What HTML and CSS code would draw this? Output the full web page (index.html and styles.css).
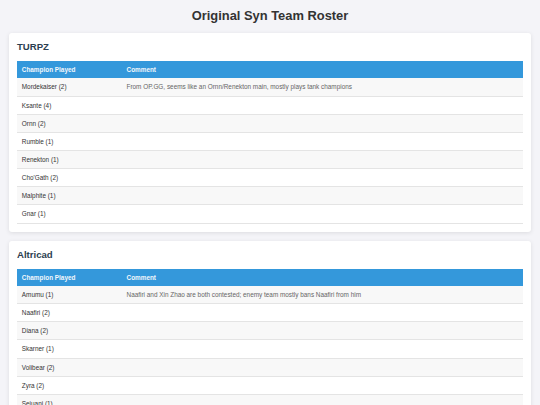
FILE: index.html
```html
<!DOCTYPE html>
<html>
<head>
<meta charset="utf-8">
<link rel="stylesheet" href="styles.css">
</head>
<body>
<h1 class="title">Original Syn Team Roster</h1>
<section class="card">
  <h2 class="player">TURPZ</h2>
  <table class="roster">
    <thead>
      <tr><th class="col-champ">Champion Played</th><th>Comment</th></tr>
    </thead>
    <tbody>
      <tr><td>Mordekaiser (2)</td><td class="comment">From OP.GG, seems like an Ornn/Renekton main, mostly plays tank champions</td></tr>
      <tr><td>Ksante (4)</td><td class="comment"></td></tr>
      <tr><td>Ornn (2)</td><td class="comment"></td></tr>
      <tr><td>Rumble (1)</td><td class="comment"></td></tr>
      <tr><td>Renekton (1)</td><td class="comment"></td></tr>
      <tr><td>Cho'Gath (2)</td><td class="comment"></td></tr>
      <tr><td>Malphite (1)</td><td class="comment"></td></tr>
      <tr><td>Gnar (1)</td><td class="comment"></td></tr>
    </tbody>
  </table>
</section>
<section class="card">
  <h2 class="player">Altricad</h2>
  <table class="roster">
    <thead>
      <tr><th class="col-champ">Champion Played</th><th>Comment</th></tr>
    </thead>
    <tbody>
      <tr><td>Amumu (1)</td><td class="comment">Naafiri and Xin Zhao are both contested; enemy team mostly bans Naafiri from him</td></tr>
      <tr><td>Naafiri (2)</td><td class="comment"></td></tr>
      <tr><td>Diana (2)</td><td class="comment"></td></tr>
      <tr><td>Skarner (1)</td><td class="comment"></td></tr>
      <tr><td>Volibear (2)</td><td class="comment"></td></tr>
      <tr><td>Zyra (2)</td><td class="comment"></td></tr>
      <tr><td>Sejuani (1)</td><td class="comment"></td></tr>
      <tr><td>Xin Zhao (1)</td><td class="comment"></td></tr>
    </tbody>
  </table>
</section>
</body>
</html>
```

FILE: styles.css
```css
html, body {
  margin: 0;
  padding: 0;
}
body {
  background: #f4f4f8;
  font-family: "Liberation Sans", Arial, sans-serif;
  color: #333;
  padding: 8px 9px;
  overflow: hidden;
}
.title {
  margin: 0 0 10px 0;
  font-size: 12.9px;
  line-height: 15px;
  text-align: center;
  color: #333;
  font-weight: bold;
}
.card {
  background: #fff;
  border-radius: 3px;
  box-shadow: 0 1px 4px rgba(0, 0, 0, 0.1);
  padding: 8px 8px 8px 8px;
  margin-bottom: 9px;
}
.player {
  margin: 0 0 9px 0;
  font-size: 9.6px;
  line-height: 11px;
  color: #2c3e50;
  font-weight: bold;
}
.roster {
  width: 100%;
  border-collapse: collapse;
  font-size: 6.4px;
}
.roster th {
  background: #3498db;
  color: #f2f7fc;
  font-weight: bold;
  text-align: left;
  padding: 5px 4.8px;
  line-height: 7.4px;
}
.roster .col-champ {
  width: 20.7%;
}
.roster td {
  padding: 5px 4.8px;
  line-height: 7.14px;
  border-bottom: 1px solid #e4e4e4;
  color: #333;
}
.roster td.comment {
  color: #666;
}
.roster tbody tr:nth-child(odd) {
  background: #f8f8f8;
}
```
